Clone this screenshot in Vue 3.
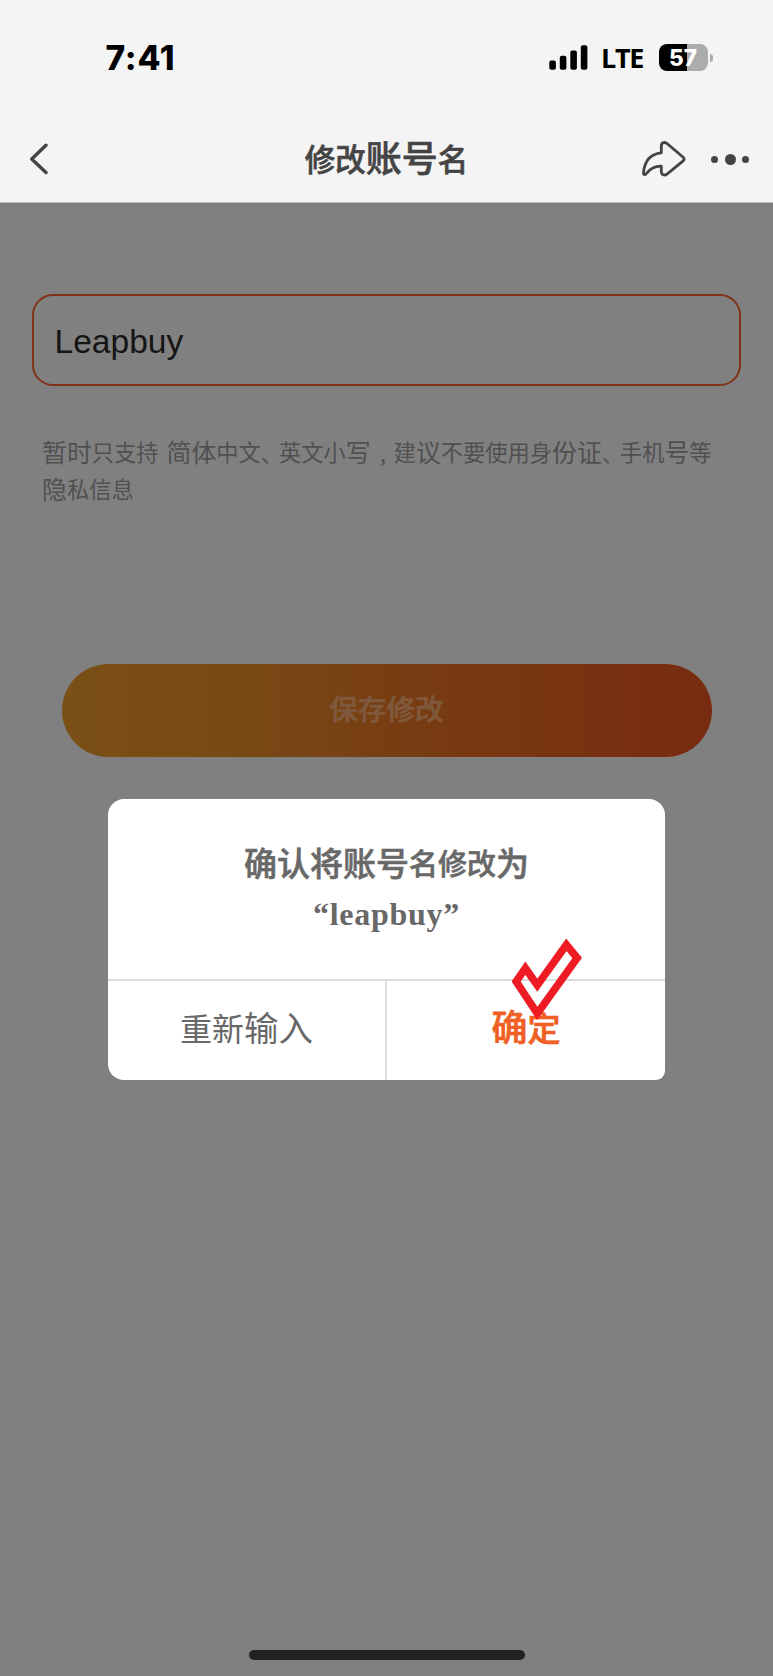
<template>
  <div class="page">
    <header class="top">
      <div class="status-bar">
        <span class="clock">7:41</span>

        <div class="status-right">
          <svg class="signal" width="40" height="26" viewBox="0 0 40 26">
            <rect x="0.3" y="15.5" width="6.6" height="9.3" rx="2" />
            <rect x="10.8" y="10.7" width="6.6" height="14.1" rx="2" />
            <rect x="21.3" y="5.6" width="6.6" height="19.2" rx="2" />
            <rect x="31.8" y="0.3" width="6.6" height="24.5" rx="2" />
          </svg>
          <span class="network">LTE</span>
          <div class="battery">
            <span class="battery-level">{{ battery }}</span>
          </div>
          <span class="battery-tip"></span>
        </div>
      </div>

      <nav class="nav-bar">
        <button class="icon-button back" aria-label="返回">
          <svg width="20" height="32" viewBox="0 0 20 32">
            <path d="M17 2.3 L2.7 16 L17 29.5" />
          </svg>
        </button>

        <h1 class="nav-title">
          <span v-for="(run, i) in title" :key="i" :class="run.kind">{{ run.text }}</span>
        </h1>

        <div class="nav-actions">
          <button class="icon-button share" aria-label="分享">
            <svg width="44" height="38" viewBox="0 0 44 38">
              <path d="M19.3 12.8 V6.2 C19.3 2.4 22.5 1.4 25.3 3.8 L41.2 17.2 Q43 19 41.2 20.8 L25.3 33.8 C22.5 36.1 19.3 35 19.3 31.2 V26.2 C12 25.8 8 29 4.6 33.3 C3.1 35.5 1.3 35.2 1.5 32.5 C2.5 22.5 7 14 19.3 12.8 Z" />
            </svg>
          </button>
          <button class="icon-button more" aria-label="更多">
            <span class="dot"></span>
            <span class="dot big"></span>
            <span class="dot"></span>
          </button>
        </div>
      </nav>
    </header>

    <main class="content">
      <input v-model="accountName" class="name-field" />

      <p class="hint">
        <span v-for="(line, n) in hint" :key="n" class="hint-line">
          <span v-for="(run, i) in line" :key="i" :class="run.kind">{{ run.text }}</span>
        </span>
      </p>

      <button class="save">保存修改</button>
    </main>

    <div class="overlay">
      <div class="dialog">
        <div class="dialog-body">
          <p class="question">
            <span v-for="(run, i) in question" :key="i" :class="run.kind">{{ run.text }}</span>
          </p>
          <p class="new-name">“{{ newName }}”</p>
        </div>

        <div class="dialog-actions">
          <button class="retry">重新<span class="wide">输入</span></button>
          <button class="confirm"><span class="wide">确</span>定</button>
        </div>

        <svg class="check" width="72" height="84" viewBox="0 0 72 84">
          <path d="M6.2 45.5 L15.4 32.2 L27.3 49.2 L56.4 8.8 L67.2 22 L27.3 77.5 Z" />
        </svg>
      </div>
    </div>

    <div class="home-indicator"></div>
  </div>
</template>

<script setup>
import { ref, computed } from 'vue'

const battery = ref(57)
const accountName = ref('Leapbuy')

const newName = computed(() => accountName.value.toLowerCase())

const title = [
  { text: '修改', kind: 'narrow' },
  { text: '账号', kind: 'wide' },
  { text: '名', kind: 'narrow' }
]

const question = [
  { text: '确认将账号', kind: 'wide' },
  { text: '名修改', kind: 'narrow' },
  { text: '为', kind: 'wide' }
]

const hint = [
  [
    { text: '暂时', kind: 'wide' },
    { text: '只支持', kind: 'narrow' },
    { text: ' ', kind: 'space' },
    { text: '简体', kind: 'wide' },
    { text: '中文', kind: 'narrow' },
    { text: '、', kind: 'mark' },
    { text: '英文小', kind: 'narrow' },
    { text: '写', kind: 'wide' },
    { text: ',', kind: 'comma' },
    { text: '建', kind: 'narrow' },
    { text: '议', kind: 'wide' },
    { text: '不要使用身', kind: 'narrow' },
    { text: '份证', kind: 'wide' },
    { text: '、', kind: 'mark' },
    { text: '手机', kind: 'narrow' },
    { text: '号', kind: 'wide' },
    { text: '等', kind: 'narrow' }
  ],
  [
    { text: '隐', kind: 'wide' },
    { text: '私信息', kind: 'narrow' }
  ]
]
</script>

<style>
body {
  background: #808080;
}
</style>

<style scoped>
.page {
  position: relative;
  box-sizing: border-box;
  width: 773px;
  height: 1676px;
  overflow: hidden;
  background: #808080;
  font-family: "Noto Sans CJK SC", sans-serif;
}

button {
  margin: 0;
  padding: 0;
  border: none;
  background: none;
  font-family: inherit;
}

h1,
p {
  margin: 0;
}

.narrow {
  vertical-align: 1px;
}

.top {
  position: relative;
  z-index: 2;
  box-sizing: border-box;
  height: 203px;
  border-bottom: 1px solid #bdbdbd;
  background: #f4f4f4;
}

.status-bar {
  display: flex;
  align-items: center;
  justify-content: space-between;
  box-sizing: border-box;
  height: 115px;
  padding: 0 60px 0 105.5px;
}

.clock {
  color: #000;
  font-family: Inter, sans-serif;
  font-size: 33.5px;
  font-weight: 800;
  letter-spacing: 0.8px;
  line-height: 40px;
}

.status-right {
  display: flex;
  align-items: center;
}

.signal {
  fill: #000;
}

.network {
  margin-left: 12.5px;
  width: 43px;
  color: #000;
  font-family: "Open Sans", sans-serif;
  font-size: 27px;
  font-weight: 700;
  letter-spacing: -1.3px;
  line-height: 30px;
}

.battery {
  display: flex;
  align-items: center;
  justify-content: center;
  box-sizing: border-box;
  width: 49px;
  height: 27px;
  margin-left: 15px;
  padding-right: 1px;
  border-radius: 8px;
  background: linear-gradient(to right, #000 0 58%, #acacac 58%);
}

.battery-level {
  color: #fff;
  font-family: Inter, sans-serif;
  font-size: 22.5px;
  font-weight: 800;
  line-height: 27px;
}

.battery-tip {
  width: 3px;
  height: 8px;
  margin-left: 2px;
  border-radius: 0 4px 4px 0;
  background: #acacac;
}

.nav-bar {
  display: grid;
  grid-template-columns: 1fr auto 1fr;
  align-items: center;
  height: 88px;
  padding: 0 24px;
}

.icon-button {
  display: flex;
  align-items: center;
}

.icon-button svg {
  fill: none;
  stroke: #444;
  stroke-linecap: round;
  stroke-linejoin: round;
}

.back {
  margin-left: 5px;
}

.back svg {
  stroke-width: 3.4;
}

.share svg {
  stroke-width: 2.8;
}

.nav-title {
  padding-bottom: 4px;
  color: #444;
  font-size: 30.5px;
  font-weight: 500;
  line-height: 44px;
  white-space: nowrap;
  -webkit-text-stroke: 0.6px #444;
}

.nav-title .wide {
  font-size: 36px;
}

.nav-actions {
  display: flex;
  align-items: center;
  justify-content: flex-end;
}

.more {
  gap: 6.5px;
  margin-left: 25px;
}

.dot {
  width: 7px;
  height: 7px;
  border-radius: 50%;
  background: #444;
}

.dot.big {
  width: 11px;
  height: 11px;
}

.content {
  display: flex;
  flex-direction: column;
  padding: 91px 32px 0;
}

.name-field {
  box-sizing: border-box;
  width: 709px;
  height: 92px;
  padding: 4px 20.5px 0;
  border: 2px solid #803216;
  border-radius: 21px;
  outline: none;
  background: transparent;
  color: #151515;
  font-family: "Liberation Sans", Arial, sans-serif;
  font-size: 33.6px;
}

.hint {
  margin: 47px 0 0 10px;
  color: #505050;
  font-size: 22.25px;
}

.hint-line {
  display: block;
  height: 37px;
  line-height: 37px;
  white-space: nowrap;
}

.hint .wide {
  font-size: 24.9px;
}

.hint .space {
  display: inline-block;
  width: 8px;
}

.hint .mark {
  font-feature-settings: "halt";
  letter-spacing: 7px;
}

.hint .comma {
  display: inline-block;
  width: 23px;
  text-indent: 9px;
}

.save {
  width: 650px;
  height: 93px;
  margin: 157px 0 0 29.5px;
  padding-bottom: 6px;
  border-radius: 47px;
  background: linear-gradient(to right, #7a5016, #784714 32%, #783c12 55%, #782b10);
  color: #80593d;
  font-size: 28.6px;
  font-weight: 500;
  -webkit-text-stroke: 0.6px #80593d;
}

.overlay {
  position: absolute;
  inset: 0;
  z-index: 1;
  display: flex;
  align-items: flex-start;
  justify-content: center;
  padding-top: 798.5px;
}

.dialog {
  position: relative;
  width: 557px;
  height: 281px;
  border-radius: 16px 16px 9px 16px;
  background: #fff;
}

.dialog-body {
  box-sizing: border-box;
  height: 180px;
  padding-top: 38px;
  color: #686868;
  text-align: center;
}

.question {
  height: 52px;
  font-size: 29px;
  font-weight: 500;
  line-height: 50px;
  white-space: nowrap;
  -webkit-text-stroke: 0.6px #686868;
}

.question .wide {
  font-size: 33px;
}

.new-name {
  font-family: "Liberation Serif", "Times New Roman", serif;
  font-size: 32px;
  font-weight: 700;
  letter-spacing: 0.75px;
  line-height: 50px;
}

.dialog-actions {
  display: grid;
  grid-template-columns: 279px 1fr;
  box-sizing: border-box;
  height: 101px;
  border-top: 2px solid #dcdcdc;
}

.dialog-actions button {
  padding-bottom: 8px;
  font-size: 32px;
  line-height: 50px;
}

.dialog-actions .wide {
  font-size: 34.5px;
}

.dialog-actions .retry {
  border-right: 2px solid #dcdcdc;
  color: #686868;
}

.dialog-actions .confirm {
  color: #f06025;
  font-size: 33px;
  font-weight: 500;
  -webkit-text-stroke: 0.7px #f06025;
}

.dialog-actions .confirm .wide {
  font-size: 36px;
}

.check {
  position: absolute;
  top: 137px;
  left: 402px;
  fill: none;
  stroke: #ed1c24;
  stroke-width: 7.6;
  stroke-miterlimit: 10;
}

.home-indicator {
  position: absolute;
  bottom: 16px;
  left: 249px;
  z-index: 2;
  width: 276px;
  height: 10px;
  border-radius: 5px;
  background: #222;
}
</style>
